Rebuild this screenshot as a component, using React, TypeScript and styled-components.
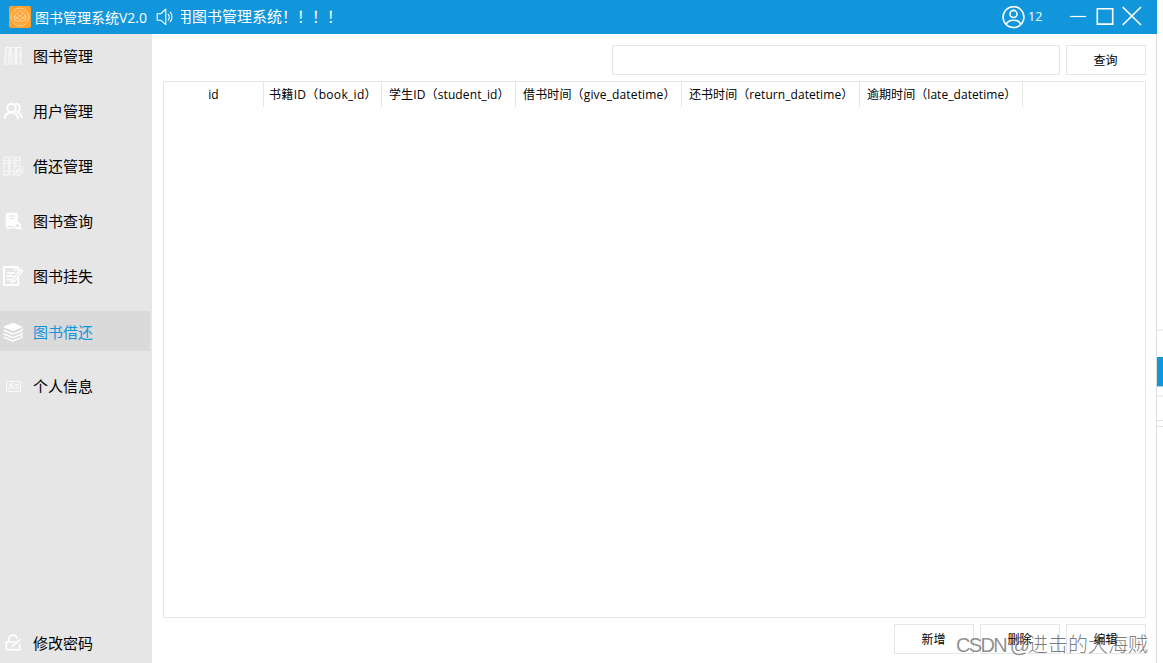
import React from 'react';
import styled, { createGlobalStyle, css } from 'styled-components';

const Global = createGlobalStyle`
  * { box-sizing: border-box; }
  html, body { margin: 0; padding: 0; background: #fff; overflow: hidden; }
  body { font-family: "Open Sans", "Noto Sans CJK SC", sans-serif; color: #000; }
`;

const Screen = styled.div`
  position: relative;
  display: flex;
  width: 1163px;
  height: 663px;
  overflow: hidden;
`;
const Window = styled.div`
  display: flex;
  flex-direction: column;
  width: 1157px;
  height: 663px;
`;
const TitleBar = styled.header`
  display: flex;
  align-items: center;
  height: 34px;
  flex: none;
  padding-left: 9px;
  background: #1296db;
  color: #fff;
`;
const AppName = styled.span`
  width: 113px;
  margin: 1px 8px 0 4px;
  font-size: 14px;
  line-height: 20px;
  white-space: nowrap;
`;
const Marquee = styled.div`
  width: 821px;
  height: 34px;
  margin-left: 7px;
  overflow: hidden;
`;
const MarqueeText = styled.div`
  margin-left: -4px;
  font-size: 15px;
  line-height: 33px;
  white-space: nowrap;
`;
const UserCount = styled.span`
  width: 41px;
  margin-left: 3px;
  font-size: 12.5px;
  line-height: 20px;
`;
const Body = styled.div`
  display: flex;
  flex: 1;
  border-right: 1px solid #dcdcdc;
`;
const Sidebar = styled.nav`
  display: flex;
  flex-direction: column;
  gap: 15px;
  width: 152px;
  padding-top: 2px;
  background: #e6e6e6;
`;
const NavItem = styled.div<{ $active?: boolean; $last?: boolean }>`
  display: flex;
  align-items: center;
  gap: 10px;
  width: 150px;
  height: 40px;
  padding-left: 3px;
  font-size: 15px;
  line-height: 40px;
  ${(p) => p.$active && css`padding-top: 2px; background: #dadada; color: #1296db;`}
  ${(p) => p.$last && css`margin-top: auto;`}
`;
const Content = styled.main`
  display: flex;
  flex-direction: column;
  width: 994px;
  padding: 11px 0 0 11px;
`;
const Row = styled.div`
  display: flex;
  justify-content: flex-end;
  gap: 6px;
  width: 983px;
`;
const SearchInput = styled.input`
  width: 448px;
  height: 30px;
  border: 1px solid #e6e6e6;
  background: #fff;
  outline: none;
`;
const Button = styled.button`
  width: 80px;
  height: 30px;
  padding: 0 1px 0 0;
  border: 1px solid #e6e6e6;
  background: #fff;
  color: #000;
  font: 400 12px/28px "Noto Sans CJK SC", sans-serif;
`;
const Table = styled.section`
  width: 983px;
  height: 537px;
  margin: 6px 0;
  border: 1px solid #e6e6e6;
`;
const TableHead = styled.div`
  display: flex;
  height: 25px;
`;
const HeadCell = styled.div<{ $width: number; $pad: number; $spacing: number }>`
  width: ${(p) => p.$width}px;
  padding-left: ${(p) => p.$pad}px;
  border-right: 1px solid #e6e6e6;
  font-size: 12px;
  line-height: 25px;
  letter-spacing: ${(p) => p.$spacing}px;
  text-align: ${(p) => (p.$pad === 0 ? 'center' : 'left')};
  white-space: nowrap;
`;
const Backdrop = styled.aside`
  display: flex;
  flex-direction: column;
  width: 6px;
`;
const Strip = styled.div<{ $height: number; $color?: string }>`
  flex: none;
  height: ${(p) => p.$height}px;
  background: ${(p) => p.$color || '#fff'};
`;
const Watermark = styled.div`
  position: absolute;
  left: 956px;
  top: 630px;
  color: rgba(80, 80, 80, 0.75);
  font: 300 20px/28px "Noto Sans CJK SC", sans-serif;
  white-space: nowrap;
  pointer-events: none;
`;
const WatermarkSite = styled.span`
  display: inline-block;
  width: 72px;
  color: rgba(80, 80, 80, 0.65);
  font: 400 20px/28px "Liberation Sans", sans-serif;
  letter-spacing: -1.7px;
`;
const Icon = styled.svg`
  flex: none;
  display: block;
  fill: none;
  stroke: #fff;
  stroke-width: 1.1;
  stroke-linecap: round;
  stroke-linejoin: round;
`;

const glyphs: Record<string, React.ReactNode> = {
  books: (
    <g opacity=".8" strokeWidth="1.2">
      <path d="M3.2 1.5h3.3L5.8 18H1.8zM8 1.5h4.2V18H8zM13.7 1.5h4.2V18h-4.2z" />
      <path d="M4 5v7M2.8 14.8h2.3M10 4.5V6M9.2 8v7h1.8V8zM15 5.5V12h1.6V5.5zM15 15h1.6" opacity=".5" />
    </g>
  ),
  users: (
    <g strokeWidth="1.9">
      <circle cx="8.5" cy="7" r="4.2" />
      <path d="M1.8 17c.5-3.6 3-5.5 6.7-5.5s5.8 2 6.3 5.5M12.7 2.8c4.6-.2 5.6 5.8 1.7 8 2.3.9 3.8 2.9 4.3 5.4" />
    </g>
  ),
  lending: (
    <g opacity=".75">
      <path d="M.8 1h4.5v18H.8zM6.9 1h4.500v18H6.9zM13 9.500V1h4v7M2 4.5h2M8 4.5h2M14.5 4.5h1.3M2 7h2M8 7h2M2 15.5h2M8 15.5h1.5" />
      <circle cx="15" cy="14.5" r="4.6" fill="#e6e6e6" />
      <path d="M12.4 14h5l-1.5-1.5M17.6 15.600h-5l1.5 1.5" />
    </g>
  ),
  query: (
    <g>
      <path d="M5 2.2h9.2v8.3l-2.8 3.2H4V3.2z" fill="#fff" />
      <path d="M7 5h5M7 7.5h3.5" stroke="#dedede" />
      <path d="M3.5 3.5v11c-.2 1.5.5 2.3 2 2.3h5M4 14h6.5" strokeWidth="1.5" />
      <circle cx="14.7" cy="14.7" r="2.6" fill="#e6e6e6" strokeWidth="1.8" />
      <path d="m17 17 .8.8" strokeWidth="1.8" />
    </g>
  ),
  report: (
    <g strokeWidth="1.8">
      <path d="M15.4 4V2.2L14.2 1H1v17.8h14.4v-6.5M4.5 6.8h6.7M4.5 10.2h5M4.5 13.7h3" />
      <path d="M11.4 1v3.2M13 1v3" strokeWidth="1.2" />
      <path d="m17.6 3.8 1.8 1.3-7.9 10-2.6 1.2.6-2.9z" strokeWidth="1.4" />
    </g>
  ),
  stack: (
    <g>
      <path d="m1.2 5.1 8.8-3.8 8.8 3.8L10 8.6z" fill="#fff" />
      <path d="m1 8.5 9 3.6 9-3.6V7M1 12l9 3.6 9-3.6v-1.3M1 15.4 10 19l9-3.6V14" strokeWidth="1.35" />
    </g>
  ),
  card: (
    <g opacity=".8" strokeWidth="1.1">
      <path d="M3.5 5.500h14v10h-14z" />
      <circle cx="8" cy="8.8" r="1.2" strokeWidth="1.3" />
      <path d="M5.8 13c.2-2.8 4.2-2.8 4.4 0" strokeWidth="1.4" />
      <path d="M12 8.500h3.500M12 10.500h3.500M12 12.500h3.500" />
    </g>
  ),
  lock: (
    <g strokeWidth="1.6">
      <path d="M11.8 8.8H3.3v8h13.4v-5.6M6 8.5V6.2C6 .9 13.3.9 13.8 5.4M9.3 13.2l7.6-6.5" />
    </g>
  ),
};

const NavIcon = ({ name }: { name: string }) => (
  <Icon width="20" height="20" viewBox="0 0 20 20">{glyphs[name]}</Icon>
);

const LogoIcon = () => (
  <Icon width="22" height="22" viewBox="0 0 22 22">
    <rect width="22" height="22" rx="2" fill="#ff9f2c" stroke="none" />
    <g stroke="#ffd9a6" strokeWidth=".9">
      <circle cx="11" cy="11" r="9" />
      <circle cx="11" cy="11" r="7.2" opacity=".3" />
      <path d="m11 5-5.500 4.500v4L8 15.200h6l2.500-1.700v-4zM6 9.800l5 4.400 5-4.400M8.300 7.500 11 10l2.700-2.500M6.200 13.300 11 9.800l4.800 3.500" />
    </g>
  </Icon>
);
const SpeakerIcon = () => (
  <Icon width="18" height="18" viewBox="0 0 18 18">
    <path d="M1.2 5.8h3.5L9.8 1v15.6l-5.1-4.4H1.2zM12.2 6.3c1.3 1.6 1.3 4 0 5.6M14.2 4.2c2.4 2.6 2.4 6.9 0 9.5" />
  </Icon>
);
const UserIcon = () => (
  <Icon width="23" height="23" viewBox="0 0 22 22">
    <g strokeWidth="1.5">
      <circle cx="11" cy="10.6" r="10" />
      <circle cx="11" cy="7.6" r="3.4" />
      <path d="M4.2 17.6c1.4-5.4 12.2-5.4 13.6 0" />
    </g>
  </Icon>
);
const WindowControls = () => (
  <Icon width="74" height="22" viewBox="0 0 74 22">
    <g strokeLinecap="butt" strokeLinejoin="miter">
      <path d="M1 10.5h16" strokeWidth="1.2" />
      <path d="M28.3 2.7h15.4v15.400H28.300z" strokeWidth="1.6" />
      <path d="m53.700 1 18.3 18M72 1 53.700 19" strokeWidth="1.6" />
    </g>
  </Icon>
);

const nav = [
  ['books', '图书管理'],
  ['users', '用户管理'],
  ['lending', '借还管理'],
  ['query', '图书查询'],
  ['report', '图书挂失'],
  ['stack', '图书借还'],
  ['card', '个人信息'],
];
const columns: [label: string, width: number, pad: number, spacing: number][] = [
  ['id', 100, 0, 0],
  ['书籍ID（book_id）', 118, 5, 0.32],
  ['学生ID（student_id）', 134, 7, 0.12],
  ['借书时间（give_datetime）', 166, 7, 0.15],
  ['还书时间（return_datetime）', 178, 7, 0.06],
  ['逾期时间（late_datetime）', 163, 7, 0.06],
];

export default function App() {
  return (
    <Screen>
      <Global />
      <Window>
        <TitleBar>
          <LogoIcon />
          <AppName>图书管理系统V2.0</AppName>
          <SpeakerIcon />
          <Marquee><MarqueeText>用图书管理系统！！！！</MarqueeText></Marquee>
          <UserIcon />
          <UserCount>12</UserCount>
          <WindowControls />
        </TitleBar>
        <Body>
          <Sidebar>
            {nav.map(([icon, label]) => (
              <NavItem key={icon} $active={icon === 'stack'}><NavIcon name={icon} />{label}</NavItem>
            ))}
            <NavItem $last><NavIcon name="lock" />修改密码</NavItem>
          </Sidebar>
          <Content>
            <Row><SearchInput /><Button>查询</Button></Row>
            <Table>
              <TableHead>
                {columns.map(([label, width, pad, spacing]) => (
                  <HeadCell key={label} $width={width} $pad={pad} $spacing={spacing}>{label}</HeadCell>
                ))}
              </TableHead>
            </Table>
            <Row><Button>新增</Button><Button>删除</Button><Button>编辑</Button></Row>
          </Content>
        </Body>
      </Window>
      <Backdrop>
        <Strip $height={329} />
        <Strip $height={2} $color="#f0f0f0" />
        <Strip $height={26} />
        <Strip $height={29} $color="#1296db" />
        <Strip $height={1} $color="#a0d5f1" />
        <Strip $height={8} />
        <Strip $height={2} $color="#f0f0f0" />
        <Strip $height={23} />
        <Strip $height={1} $color="#e2e2e2" />
        <Strip $height={5} />
        <Strip $height={1} $color="#e2e2e2" />
      </Backdrop>
      <Watermark><WatermarkSite>CSDN @</WatermarkSite>进击的大海贼</Watermark>
    </Screen>
  );
}
